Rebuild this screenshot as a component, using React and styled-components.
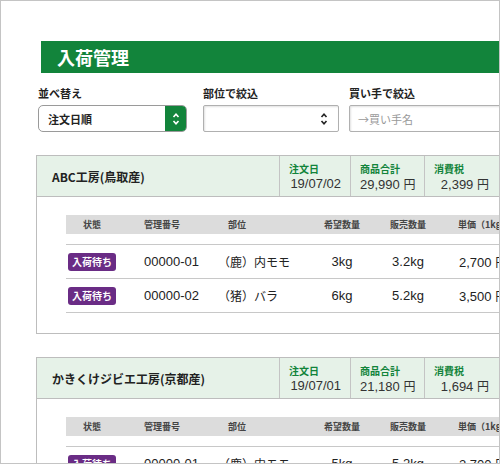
import React from 'react';
import styled, { createGlobalStyle } from 'styled-components';

const green = "#12843b";
const rule = "#c4c4c4";

const orders = [
    {
        shop: "ABC工房(鳥取産)",
        date: "19/07/02",
        total: "29,990",
        tax: "2,399",
        rows: [
            { id: "00000-01", part: "（鹿）内モモ", want: "3kg", sold: "3.2kg", price: "2,700" },
            { id: "00000-02", part: "（猪）バラ", want: "6kg", sold: "5.2kg", price: "3,500" }
        ]
    },
    {
        shop: "かきくけジビエ工房(京都産)",
        date: "19/07/01",
        total: "21,180",
        tax: "1,694",
        rows: [
            { id: "00000-01", part: "（鹿）内モモ", want: "5kg", sold: "5.2kg", price: "2,700" }
        ]
    }
];

const Arrows = ({ color }) => (
    <svg width="8" height="14" viewBox="0 0 8 14">
        <path d="M1.5 5 L4 2.2 L6.5 5 M1.5 9 L4 11.8 L6.5 9" fill="none" stroke={color} strokeWidth="1.6" />
    </svg>
);

export default class App extends React.Component
{
    render()
    {
        return(
            <Frame>
                <GlobalStyle />
                <Page>
                    <Title>入荷管理</Title>
                    <Filters>
                        <Filter width={149} gap={16}>
                            <Label>並べ替え</Label>
                            <SortBox>
                                <SortValue>注文日順</SortValue>
                                <SortButton><Arrows color="#fff" /></SortButton>
                            </SortBox>
                        </Filter>
                        <Filter width={136} gap={10}>
                            <Label>部位で絞込</Label>
                            <PlainBox>
                                <Arrows color="#222" />
                            </PlainBox>
                        </Filter>
                        <Filter width={200}>
                            <Label>買い手で絞込</Label>
                            <PlainBox>
                                <Placeholder>→買い手名</Placeholder>
                            </PlainBox>
                        </Filter>
                    </Filters>
                    {orders.map((order, i) =>
                        <Card key={i}>
                            <CardHeader>
                                <Shop>{order.shop}</Shop>
                                <Summary width={71}>
                                    <SumLabel>注文日</SumLabel>
                                    <SumValue>{order.date}</SumValue>
                                </Summary>
                                <Summary width={74}>
                                    <SumLabel>商品合計</SumLabel>
                                    <SumValue>{order.total} <Yen>円</Yen></SumValue>
                                </Summary>
                                <Summary width={74}>
                                    <SumLabel>消費税</SumLabel>
                                    <SumValue>{order.tax} <Yen>円</Yen></SumValue>
                                </Summary>
                            </CardHeader>
                            <CardBody>
                                <HeadRow>
                                    <HeadCell align="center">状態</HeadCell>
                                    <HeadCell pad={26}>管理番号</HeadCell>
                                    <HeadCell pad={10}>部位</HeadCell>
                                    <HeadCell align="center">希望数量</HeadCell>
                                    <HeadCell align="center">販売数量</HeadCell>
                                    <HeadCell pad={17}>単価（1kg）</HeadCell>
                                </HeadRow>
                                <Rows>
                                    {order.rows.map((row, j) =>
                                        <Row key={j}>
                                            <Cell align="center"><Badge>入荷待ち</Badge></Cell>
                                            <Cell pad={26}>{row.id}</Cell>
                                            <Cell><Part>{row.part}</Part></Cell>
                                            <Cell align="center">{row.want}</Cell>
                                            <Cell align="center">{row.sold}</Cell>
                                            <Cell pad={18}><span>{row.price} <Yen>円</Yen></span></Cell>
                                        </Row>)}
                                </Rows>
                            </CardBody>
                        </Card>)}
                </Page>
            </Frame>
        )
    }
}

const GlobalStyle = createGlobalStyle`
    body {
        margin: 0;
        background: #fff;
        font-family: "Liberation Sans", "Noto Sans CJK JP", sans-serif;
        color: #222;
    }
`

const Frame = styled.div`
    width: 500px;
    height: 464px;
    box-sizing: border-box;
    border: 1px solid ${rule};
    overflow: hidden;
`

const Page = styled.div`
    width: 640px;
    padding-top: 40px;
`

const Title = styled.h1`
    margin: 0 0 0 40px;
    height: 32px;
    line-height: 32px;
    padding-left: 16px;
    background: ${green};
    color: #fff;
    font-family: "Noto Sans CJK JP", sans-serif;
    font-size: 18px;
    font-weight: 700;
`

const Filters = styled.div`
    display: flex;
    margin: 12px 0 0 37px;
`

const Filter = styled.div`
    display: flex;
    flex-direction: column;
    width: ${props => props.width}px;
    margin-right: ${props => props.gap || 0}px;
`

const Label = styled.div`
    font-family: "Noto Sans CJK JP", sans-serif;
    font-size: 11px;
    font-weight: 700;
    line-height: 16px;
    margin-bottom: 4px;
    color: #222;
`

const SortBox = styled.div`
    display: flex;
    height: 27px;
    box-sizing: border-box;
    border: 1px solid #9a9a9a;
    border-radius: 5px;
    overflow: hidden;
`

const SortValue = styled.div`
    flex: 1;
    display: flex;
    align-items: center;
    padding-left: 9px;
    font-family: "Noto Sans CJK JP", sans-serif;
    font-size: 11px;
    font-weight: 700;
`

const SortButton = styled.div`
    width: 21px;
    display: flex;
    align-items: center;
    justify-content: center;
    background: ${green};
`

const PlainBox = styled.div`
    display: flex;
    align-items: center;
    justify-content: flex-end;
    height: 27px;
    box-sizing: border-box;
    padding: 0 10px 0 8px;
    border: 1px solid #b0b0b0;
    border-radius: 2px;
    box-shadow: inset 1px 1px 2px rgba(0, 0, 0, 0.12);
`

const Placeholder = styled.div`
    flex: 1;
    font-family: "Noto Sans CJK JP", sans-serif;
    font-size: 11px;
    color: #999;
`

const Card = styled.div`
    margin: 23px 0 0 35px;
    border: 1px solid #bdbdbd;
`

const CardHeader = styled.div`
    display: flex;
    height: 40px;
    background: #e6f2e8;
    border-bottom: 1px solid #bdbdbd;
`

const Shop = styled.div`
    width: 242px;
    display: flex;
    align-items: center;
    padding-left: 15px;
    box-sizing: border-box;
    font-family: "Noto Sans CJK JP", sans-serif;
    font-size: 12px;
    font-weight: 700;
    color: #222;
`

const Summary = styled.div`
    width: ${props => props.width}px;
    box-sizing: border-box;
    border-left: 1px solid #c4c4c4;
    padding: 6px 9px 0 9px;
`

const SumLabel = styled.div`
    font-family: "Noto Sans CJK JP", sans-serif;
    font-size: 10px;
    font-weight: 700;
    line-height: 14px;
    color: ${green};
`

const SumValue = styled.div`
    font-size: 13px;
    line-height: 15px;
    text-align: right;
    color: #333;
    white-space: nowrap;
`

const Yen = styled.span`
    font-family: "Noto Sans CJK JP", sans-serif;
    font-size: 12px;
`

const CardBody = styled.div`
    padding: 18px 0 20px 29px;
`

const columns = "52px 100px 91px 66px 66px 120px";

const HeadRow = styled.div`
    display: grid;
    grid-template-columns: ${columns};
    height: 19px;
    background: #dcdcdc;
`

const HeadCell = styled.div`
    display: flex;
    align-items: center;
    justify-content: ${props => props.align === "center" ? "center" : "flex-start"};
    padding-left: ${props => props.pad || 0}px;
    font-family: "Noto Sans CJK JP", sans-serif;
    font-size: 9px;
    font-weight: 700;
    color: #444;
    white-space: nowrap;
`

const Rows = styled.div`
    margin-top: 10px;
    border-top: 1px solid #c8c8c8;
`

const Row = styled.div`
    display: grid;
    grid-template-columns: ${columns};
    height: 33px;
    border-bottom: 1px solid #c8c8c8;
`

const Cell = styled.div`
    display: flex;
    align-items: center;
    justify-content: ${props => props.align === "center" ? "center" : "flex-start"};
    padding-left: ${props => props.pad || 0}px;
    font-size: 13px;
    color: #222;
    white-space: nowrap;
`

const Part = styled.span`
    font-family: "Noto Sans CJK JP", sans-serif;
    font-size: 12px;
`

const Badge = styled.span`
    display: inline-flex;
    align-items: center;
    justify-content: center;
    width: 48px;
    height: 18px;
    border-radius: 3px;
    background: #6a2c85;
    color: #fff;
    font-family: "Noto Sans CJK JP", sans-serif;
    font-size: 10px;
    font-weight: 700;
`
